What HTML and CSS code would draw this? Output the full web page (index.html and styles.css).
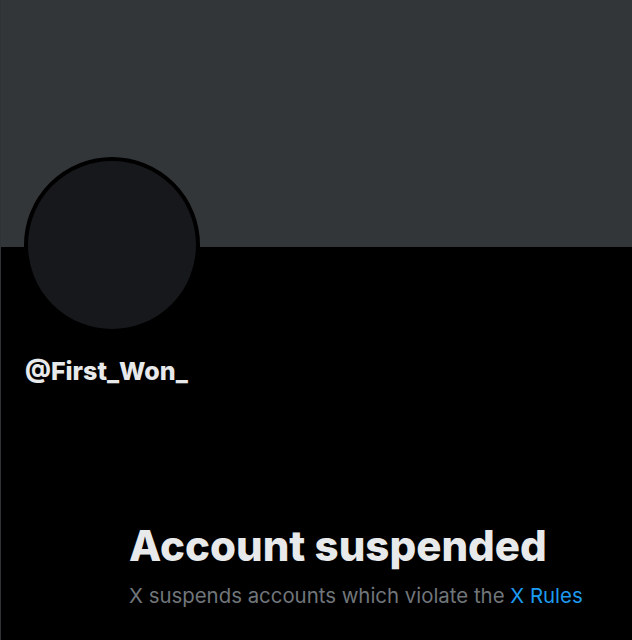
FILE: index.html
```html
<!DOCTYPE html>
<html lang="en">
<head>
<meta charset="utf-8">
<title>@First_Won_ / X</title>
<link rel="stylesheet" href="styles.css">
</head>
<body>
<main class="page">
  <div class="banner"></div>
  <section class="profile">
    <div class="avatar"></div>
    <div class="handle">@First_Won_</div>
  </section>
  <section class="notice">
    <h1 class="notice-title">Account suspended</h1>
    <p class="notice-text">X suspends accounts which violate the <a class="notice-link" href="#">X Rules</a></p>
  </section>
</main>
</body>
</html>
```
FILE: styles.css
```css
html, body {
  margin: 0;
  padding: 0;
  background: #000;
}
body {
  font-family: Inter, "Liberation Sans", sans-serif;
  color: #e7e9ea;
}
.page {
  width: 632px;
  height: 640px;
  box-sizing: border-box;
  border-left: 1px solid #2f3336;
  overflow: hidden;
}
.banner {
  height: 247px;
  background: #333639;
}
.profile {
  padding-left: 23px;
}
.avatar {
  width: 176px;
  height: 176px;
  box-sizing: border-box;
  border: 4px solid #000;
  border-radius: 50%;
  background: #16181c;
  margin-top: -90px;
}
.handle {
  margin-top: 22px;
  padding-left: 1px;
  font-size: 25px;
  line-height: 32px;
  font-weight: 800;
  color: #e7e9ea;
}
.notice {
  margin-top: 135px;
  padding-left: 128px;
}
.notice-title {
  margin: 0;
  font-size: 42px;
  line-height: 48px;
  font-weight: 800;
  color: #e7e9ea;
}
.notice-text {
  margin: 12px 0 0;
  font-size: 20.4px;
  line-height: 27px;
  font-weight: 400;
  color: #71767b;
}
.notice-link {
  color: #1d9bf0;
  text-decoration: none;
}
```
